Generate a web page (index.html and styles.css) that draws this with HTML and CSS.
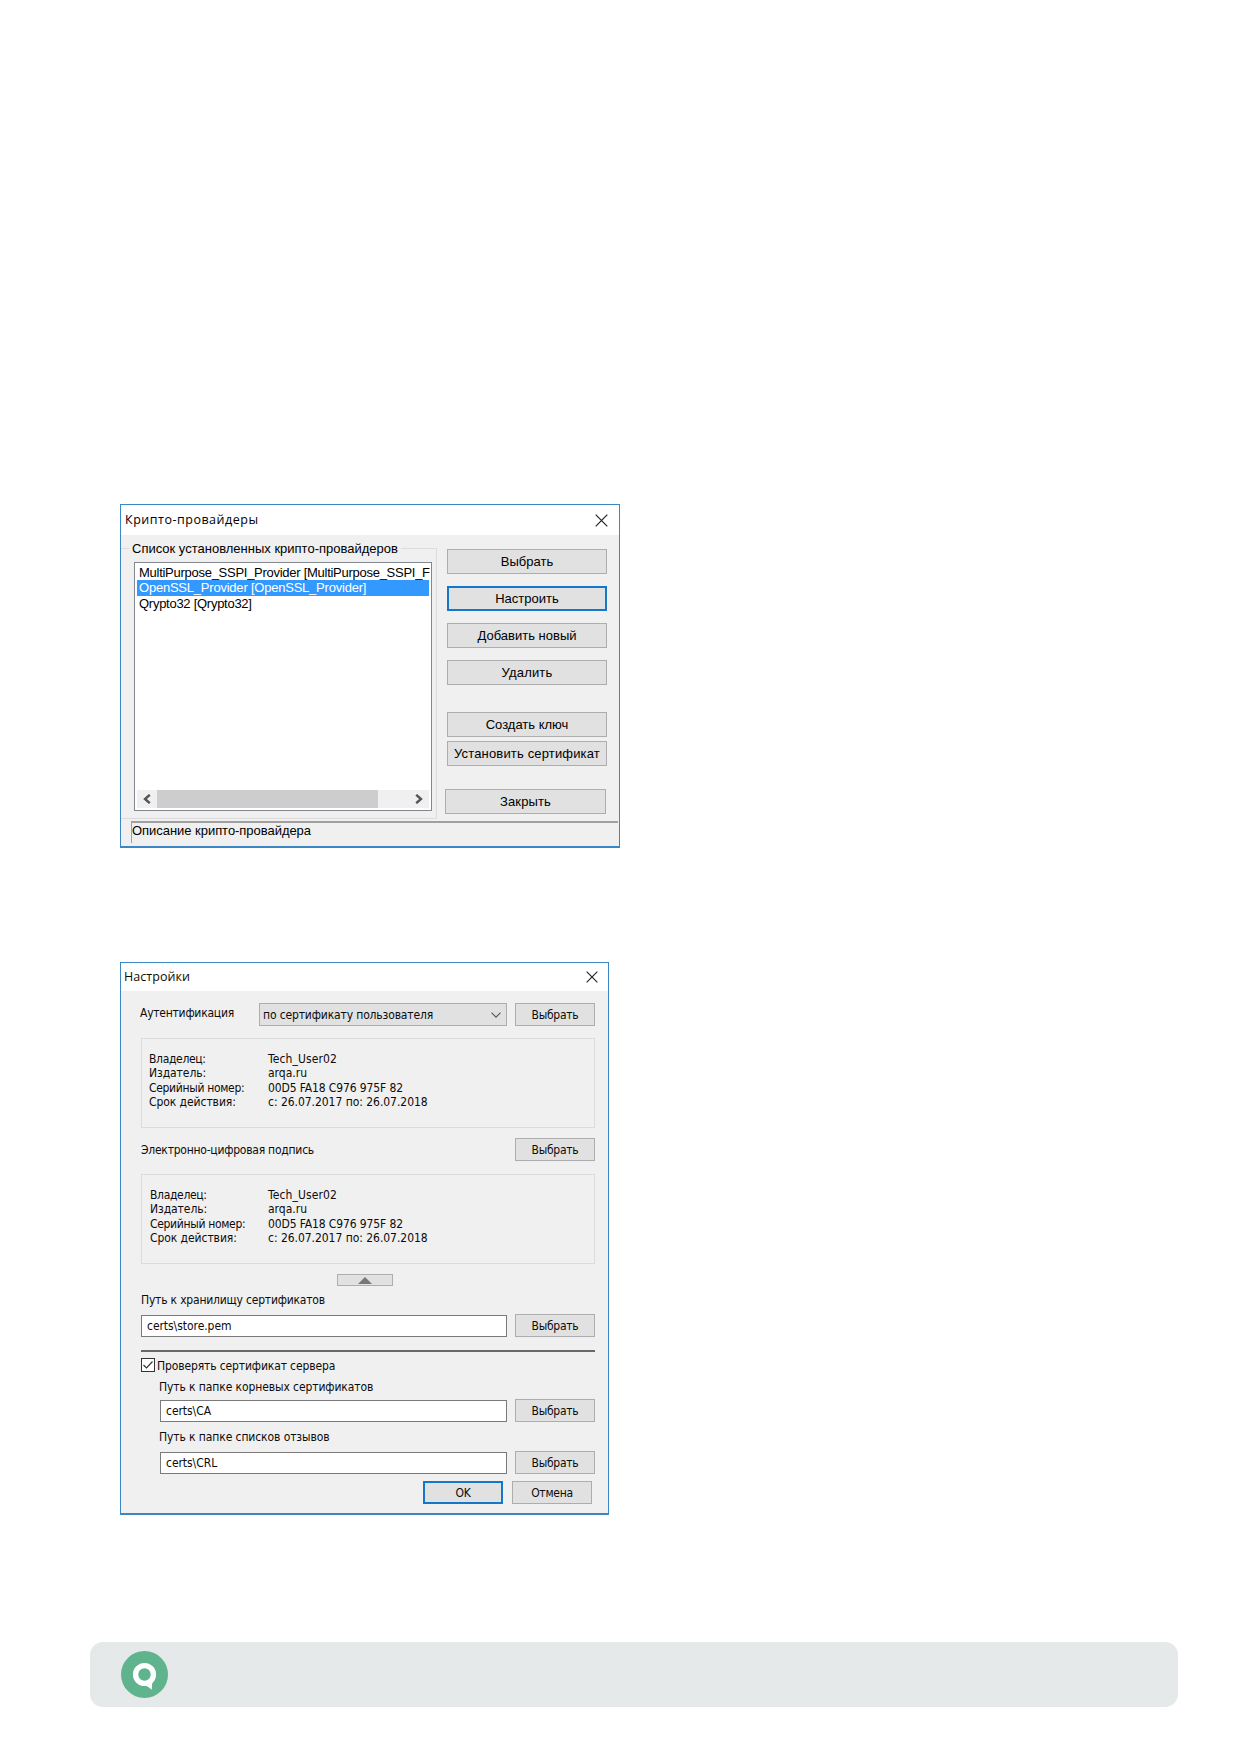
FILE: index.html
```html
<!DOCTYPE html>
<html lang="ru">
<head>
<meta charset="utf-8">
<title>Крипто-провайдеры</title>
<link rel="stylesheet" href="styles.css">
</head>
<body>
<section class="dialog providers">
  <header class="titlebar"><span>Крипто-провайдеры</span>
    <svg class="close" viewBox="0 0 13 13"><path d="M.7.7l11.6 11.6M12.3.7L.7 12.3"/></svg></header>
  <div class="providers-body">
    <div class="group">
      <div class="legend">Список установленных крипто-провайдеров</div>
      <div class="listbox">
        <div class="item">MultiPurpose_SSPI_Provider [MultiPurpose_SSPI_F</div>
        <div class="item selected">OpenSSL_Provider [OpenSSL_Provider]</div>
        <div class="item">Qrypto32 [Qrypto32]</div>
        <div class="scrollbar">
          <svg class="arrow" viewBox="0 0 8 10"><path d="M6.8.8L2 5l4.800 4.200"/></svg>
          <div class="thumb"></div>
          <svg class="arrow last" viewBox="0 0 8 10"><path d="M1.200.8L6 5 1.200 9.200"/></svg>
        </div>
      </div>
    </div>
    <div class="actions">
      <div class="btn">Выбрать</div>
      <div class="btn primary">Настроить</div>
      <div class="btn">Добавить новый</div>
      <div class="btn delete">Удалить</div>
      <div class="btn create">Создать ключ</div>
      <div class="btn install">Установить сертификат</div>
      <div class="btn dismiss">Закрыть</div>
    </div>
  </div>
  <div class="status">Описание крипто-провайдера</div>
</section>

<section class="dialog settings">
  <header class="titlebar"><span>Настройки</span>
    <svg class="close" viewBox="0 0 13 13"><path d="M.7.7l11.6 11.6M12.3.7L.7 12.3"/></svg></header>
  <div class="settings-body">
    <div class="row auth">
      <div class="auth-label">Аутентификация</div>
      <div class="combo"><span>по сертификату пользователя</span>
        <svg class="chevron" viewBox="0 0 10 6"><path d="M.5.7L5 5.200 9.500.7"/></svg></div>
      <div class="btn">Выбрать</div>
    </div>
    <div class="cert">
      <span class="key">Владелец:</span><span class="user">Tech_User02</span>
      <span>Издатель:</span><span class="issuer">arqa.ru</span>
      <span class="key">Серийный номер:</span><span class="serial">00D5 FA18 C976 975F 82</span>
      <span>Срок действия:</span><span class="dates">с: 26.07.2017 по: 26.07.2018</span>
    </div>
    <div class="row signature">
      <div class="signature-label">Электронно-цифровая подпись</div>
      <div class="btn">Выбрать</div>
    </div>
    <div class="cert second">
      <span class="key">Владелец:</span><span class="user">Tech_User02</span>
      <span>Издатель:</span><span class="issuer">arqa.ru</span>
      <span class="key">Серийный номер:</span><span class="serial">00D5 FA18 C976 975F 82</span>
      <span>Срок действия:</span><span class="dates">с: 26.07.2017 по: 26.07.2018</span>
    </div>
    <div class="collapse"><svg viewBox="0 0 14 7"><path d="M7 0l7 7H0z"/></svg></div>
    <div class="caption store">Путь к хранилищу сертификатов</div>
    <div class="row path"><div class="input">certs\store.pem</div><div class="btn">Выбрать</div></div>
    <div class="rule"></div>
    <div class="check"><div class="box"><svg viewBox="0 0 12 12"><path d="M1.500 6l3 3L10.500 2.500"/></svg></div><span>Проверять сертификат сервера</span></div>
    <div class="caption roots">Путь к папке корневых сертификатов</div>
    <div class="row path nested ca"><div class="input">certs\CA</div><div class="btn">Выбрать</div></div>
    <div class="caption revoked">Путь к папке списков отзывов</div>
    <div class="row path nested crl"><div class="input">certs\CRL</div><div class="btn">Выбрать</div></div>
    <div class="row confirm"><div class="btn primary">OK</div><div class="btn">Отмена</div></div>
  </div>
</section>

<footer class="footer">
  <svg class="logo" viewBox="0 0 47 47"><circle cx="23.500" cy="23.500" r="23.500" fill="#5fb38d"/><circle cx="23.500" cy="23.500" r="8.900" fill="none" stroke="#fff" stroke-width="5.400"/><path d="M22 33.500c3 .8 5.500 2.500 8.700 5.200L31.500 29z" fill="#fff"/></svg>
</footer>
</body>
</html>
```
FILE: styles.css
```css
* { box-sizing: border-box; }
body { margin: 0; width: 1240px; height: 1754px; background: #fff; color: #0c0c0c; overflow: hidden; padding-top: 504px; }
svg { display: block; fill: none; flex: none; }

.dialog { margin-left: 120px; background: #f0f0f0; border: 1px solid #3b87c6; border-bottom-width: 2px; white-space: nowrap; }
.titlebar { display: flex; align-items: center; justify-content: space-between; background: #fff; font-family: "Open Sans", "Noto Sans", sans-serif; font-size: 12.5px; }
.close { width: 13px; height: 13px; stroke: #222; stroke-width: 1.2; }
.btn { display: flex; align-items: center; justify-content: center; background: #e1e1e1; border: 1px solid #adadad; }
.btn.primary { border: 2px solid #1677c8; }

.providers { width: 500px; height: 344px; font: 13px/16px "Liberation Sans", Arial, sans-serif; color: #000; }
.providers .titlebar { height: 30px; padding: 0 11px 0 4px; letter-spacing: .51px; }
.providers-body { display: flex; height: 286px; }
.group { width: 316px; height: 271px; margin-top: 13px; padding-left: 13px; border: 1px solid #dcdcdc; border-left: 0; }
.legend { width: fit-content; margin: -8px 0 5px -5px; padding: 0 3px; background: #f0f0f0; }
.listbox { display: flex; flex-direction: column; width: 298px; height: 249px; padding: 1.5px 2px 2px; background: #fff; border: 1px solid #828790; }
.item { height: 15.5px; line-height: 15.5px; padding-left: 2px; letter-spacing: -.27px; }
.item.selected { background: #3399ff; color: #fff; letter-spacing: -.22px; }
.scrollbar { display: flex; align-items: center; height: 18px; margin-top: auto; padding: 0 6px; background: #f0f0f0; }
.arrow { width: 8px; height: 10px; stroke: #555; stroke-width: 2.4; }
.arrow.last { margin-left: auto; }
.thumb { width: 221px; height: 18px; margin-left: 6px; background: #cdcdcd; }
.actions { display: flex; flex-direction: column; gap: 12px; padding: 14px 0 0 10px; }
.providers .btn { width: 160px; height: 25px; padding-top: 1px; flex: none; }
.providers .delete { letter-spacing: .19px; }
.providers .create { margin-top: 15px; }
.providers .install { margin-top: -8px; letter-spacing: .16px; }
.providers .dismiss { margin: 11px 0 0 -2px; width: 161px; letter-spacing: .13px; }
.status { height: 22px; margin: 0 1px 0 10px; border-top: 2px solid #a0a0a0; border-left: 1px solid #a0a0a0; letter-spacing: -.04px; }

.settings { width: 489px; height: 553px; margin-top: 114px; font: 12px/16px "DejaVu Sans Condensed", "DejaVu Sans", sans-serif; }
.settings .titlebar { height: 28px; padding: 0 10px 0 3px; letter-spacing: .05px; }
.settings .close { width: 12px; height: 12px; }
.settings-body { padding: 12px 13px 0 20px; }
.settings .btn { width: 80px; height: 23px; flex: none; letter-spacing: -.25px; }
.row { display: flex; height: 23px; }
.auth-label { width: 119px; margin-left: -1px; padding-top: 2px; letter-spacing: -.24px; }
.combo { display: flex; align-items: center; justify-content: space-between; width: 248px; margin-right: 8px; padding: 0 5px 0 3px; background: #e1e1e1; border: 1px solid #adadad; letter-spacing: -.14px; }
.chevron { width: 10px; height: 6px; stroke: #555; stroke-width: 1.1; }
.cert { display: grid; grid-template-columns: 119px 1fr; grid-auto-rows: 14.3px; height: 90px; margin: 12px 0 10px; padding: 12px 0 0 7px; border: 1px solid #dcdcdc; letter-spacing: -.07px; }
.cert.second { margin-top: 13px; padding-left: 8px; grid-template-columns: 118px 1fr; }
.key { letter-spacing: -.32px; }
.user { letter-spacing: .12px; }
.issuer { letter-spacing: 0; }
.serial { letter-spacing: -.12px; }
.dates { letter-spacing: -.04px; }
.signature { justify-content: space-between; align-items: center; }
.signature-label { letter-spacing: -.24px; }
.collapse { display: flex; justify-content: center; align-items: center; width: 56px; height: 12px; margin-left: 196px; background: #e1e1e1; border: 1px solid #adadad; }
.collapse svg { width: 14px; height: 7px; fill: #777; }
.caption { height: 16px; }
.store { margin: 6px 0; letter-spacing: -.2px; }
.input { display: flex; align-items: center; flex: 1; height: 22px; margin: 1px 8px 0 0; padding-left: 5px; background: #fff; border: 1px solid #7a7a7a; letter-spacing: -.05px; }
.rule { height: 2px; margin: 13px 0 6px; background: #696969; }
.check { display: flex; align-items: center; gap: 2px; height: 14px; letter-spacing: -.13px; }
.check span { padding-top: 1px; }
.box { width: 14px; height: 14px; background: #fff; border: 1px solid #333; }
.box svg { width: 12px; height: 12px; stroke: #333; stroke-width: 1.2; }
.roots, .revoked { margin-left: 18px; letter-spacing: -.1px; }
.roots { margin-top: 7px; }
.revoked { position: relative; top: -1px; }
.ca { margin: 4px 0 8px 19px; }
.crl { margin: 5px 0 0 19px; }
.confirm { justify-content: flex-end; gap: 9px; margin: 7px 3px 0 0; }

.footer { display: flex; align-items: center; width: 1088px; height: 65px; margin: 127px 0 0 90px; padding-left: 31px; background: #e6e9e9; border-radius: 13px; }
.logo { width: 47px; height: 47px; }
```
